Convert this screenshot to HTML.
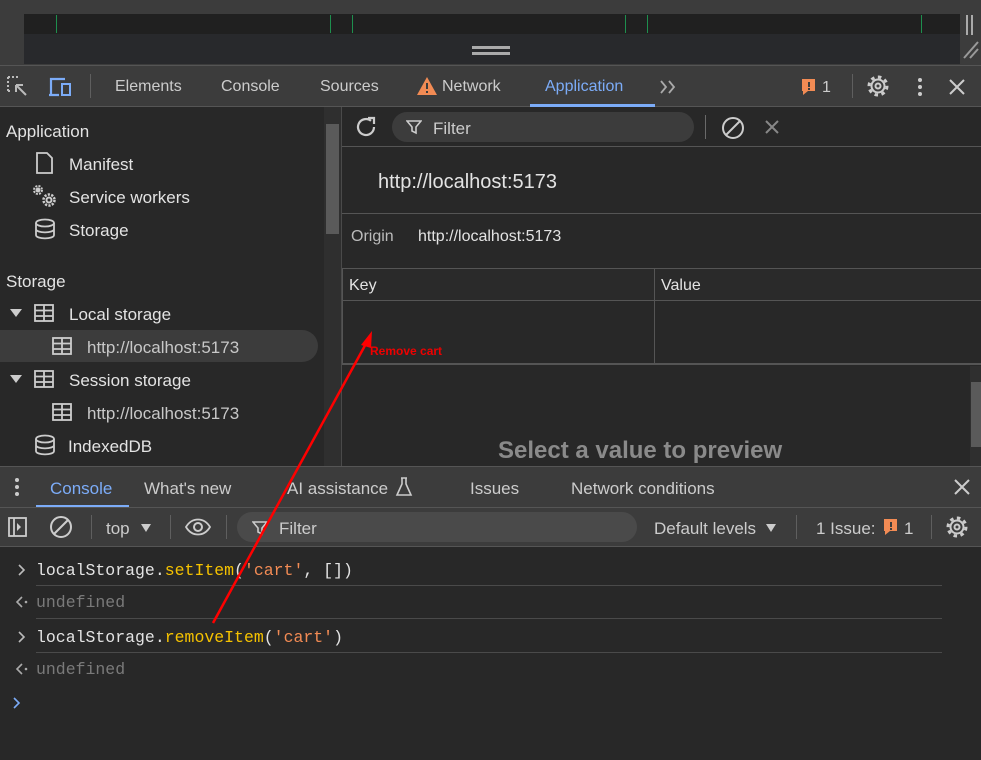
<!DOCTYPE html>
<html><head><style>
*{margin:0;padding:0;box-sizing:border-box}
body{width:981px;height:760px;overflow:hidden;background:#282828;font-family:"Liberation Sans",sans-serif;color:#e3e3e3;position:relative}
.a{position:absolute}
.t{font-size:16px;white-space:nowrap}
.mono{font-family:"Liberation Mono",monospace;font-size:16.5px;white-space:nowrap}
</style></head><body>
<div class="a" style="left:0;top:0;width:981px;height:65px;background:#3c3c3c"></div>
<div class="a" style="left:24px;top:14px;width:936px;height:20px;background:#202020"></div>
<div class="a" style="left:24px;top:34px;width:936px;height:30px;background:#28292c"></div>
<div class="a" style="left:56px;top:15px;width:1px;height:18px;background:#1e8f4e"></div>
<div class="a" style="left:330px;top:15px;width:1px;height:18px;background:#1e8f4e"></div>
<div class="a" style="left:352px;top:15px;width:1px;height:18px;background:#1e8f4e"></div>
<div class="a" style="left:625px;top:15px;width:1px;height:18px;background:#1e8f4e"></div>
<div class="a" style="left:647px;top:15px;width:1px;height:18px;background:#1e8f4e"></div>
<div class="a" style="left:921px;top:15px;width:1px;height:18px;background:#1e8f4e"></div>
<div class="a" style="left:472px;top:46px;width:38px;height:3px;background:#aaa"></div>
<div class="a" style="left:472px;top:52px;width:38px;height:3px;background:#aaa"></div>
<div class="a" style="left:966px;top:15px;width:2px;height:20px;background:#aaa"></div>
<div class="a" style="left:971px;top:15px;width:2px;height:20px;background:#aaa"></div>
<svg class="a" style="left:960px;top:38px" width="21" height="22"><path d="M4 20L18 4M10 20L18 11" stroke="#999" stroke-width="2"/></svg>
<div class="a" style="left:0;top:65px;width:981px;height:42px;background:#3c3c3c;border-top:1px solid #555;border-bottom:1px solid #555"></div>
<svg class="a" style="left:6px;top:75px" width="24" height="24"><path d="M2 2h12M2 2v14M2 16h4" stroke="#bbb" stroke-width="2" stroke-dasharray="2 2" fill="none"/><path d="M10 10l10 10M10 10v7M10 10h7" stroke="#bbb" stroke-width="2" fill="none"/></svg>
<svg class="a" style="left:47px;top:75px" width="28" height="24"><path d="M4 20V4h14M2 20h10" stroke="#7cacf8" stroke-width="2.2" fill="none"/><rect x="15" y="9" width="8" height="11" stroke="#7cacf8" stroke-width="2" fill="none"/></svg>
<div class="a" style="left:90px;top:74px;width:1px;height:24px;background:#5f5f5f"></div>
<div class="a t" style="left:115px;top:78px;color:#ccc">Elements</div>
<div class="a t" style="left:221px;top:78px;color:#ccc">Console</div>
<div class="a t" style="left:320px;top:78px;color:#ccc">Sources</div>
<svg class="a" style="left:416px;top:76px" width="22" height="20"><path d="M11 1L21 19H1Z" fill="#f28b54"/><rect x="10" y="7" width="2" height="6" fill="#3c3c3c"/><rect x="10" y="15" width="2" height="2" fill="#3c3c3c"/></svg>
<div class="a t" style="left:442px;top:78px;color:#ccc">Network</div>
<div class="a t" style="left:545px;top:78px;color:#7cacf8">Application</div>
<div class="a" style="left:530px;top:104px;width:125px;height:3px;background:#7cacf8"></div>
<svg class="a" style="left:658px;top:78px" width="22" height="18"><path d="M3 3l5 6-5 6M11 3l5 6-5 6" stroke="#aaa" stroke-width="1.8" fill="none"/></svg>
<svg class="a" style="left:800px;top:78px" width="18" height="18"><path d="M2 1h13v12H8l-5 4v-4H2Z" fill="#f28b54"/><rect x="8" y="4" width="2" height="5" fill="#3c3c3c"/><rect x="8" y="10" width="2" height="2" fill="#3c3c3c"/></svg>
<div class="a t" style="left:822px;top:79px;color:#ccc">1</div>
<div class="a" style="left:852px;top:74px;width:1px;height:24px;background:#5f5f5f"></div>
<svg class="a" style="left:866px;top:74px" width="24" height="24"><circle cx="12" cy="12" r="9" stroke="#ccc" stroke-width="3" fill="none" stroke-dasharray="3.5 3.5"/><circle cx="12" cy="12" r="6.5" stroke="#ccc" stroke-width="2" fill="none"/><circle cx="12" cy="12" r="2.5" stroke="#ccc" stroke-width="2" fill="none"/></svg>
<div class="a" style="left:918px;top:78px;width:4px;height:4px;border-radius:2px;background:#ccc;box-shadow:0 7px #ccc,0 14px #ccc"></div>
<svg class="a" style="left:948px;top:78px" width="18" height="18"><path d="M2 2L16 16M16 2L2 16" stroke="#ccc" stroke-width="2"/></svg>
<div class="a t" style="left:6px;top:122px;font-size:17px">Application</div>
<svg class="a" style="left:36px;top:152px" width="18" height="22"><path d="M1 1h10l5 5v15H1Z" stroke="#ccc" stroke-width="1.8" fill="none"/></svg>
<div class="a t" style="left:69px;top:155px;font-size:17px">Manifest</div>
<svg class="a" style="left:32px;top:184px" width="28" height="24"><circle cx="6" cy="6" r="4" stroke="#ccc" stroke-width="2" stroke-dasharray="2 1.2" fill="none"/><circle cx="6" cy="6" r="2.5" fill="#ccc"/><circle cx="17" cy="16" r="5.5" stroke="#ccc" stroke-width="2.5" stroke-dasharray="2.2 1.3" fill="none"/><circle cx="17" cy="16" r="3.5" fill="#ccc"/><circle cx="17" cy="16" r="1.5" fill="#282828"/></svg>
<div class="a t" style="left:69px;top:188px;font-size:17px">Service workers</div>
<svg class="a" style="left:34px;top:218px" width="22" height="22"><ellipse cx="11" cy="5" rx="9" ry="3.5" stroke="#ccc" stroke-width="1.8" fill="none"/><path d="M2 5v12c0 4.5 18 4.5 18 0V5M2 11c0 4.5 18 4.5 18 0" stroke="#ccc" stroke-width="1.8" fill="none"/></svg>
<div class="a t" style="left:69px;top:221px;font-size:17px">Storage</div>
<div class="a t" style="left:6px;top:272px;font-size:17px">Storage</div>
<div class="a" style="left:0;top:330px;width:318px;height:32px;background:#3c3c3c;border-radius:0 16px 16px 0"></div>
<svg class="a" width="0" height="0"><defs><g id="tb"><rect x="1" y="1" width="18" height="16" stroke="#ccc" stroke-width="1.8" fill="none"/><path d="M1 6.5h18M1 12h18M10 1v16" stroke="#ccc" stroke-width="1.8"/></g></defs></svg>
<div class="a" style="left:10px;top:309px;border:6px solid transparent;border-top:8px solid #ccc;border-bottom:0"></div>
<svg class="a" style="left:34px;top:304px" width="22" height="20"><use href="#tb"/></svg>
<div class="a t" style="left:69px;top:305px;font-size:17px">Local storage</div>
<svg class="a" style="left:52px;top:337px" width="22" height="20"><use href="#tb"/></svg>
<div class="a t" style="left:87px;top:338px;font-size:17px;color:#c8c8c8">http://localhost:5173</div>
<div class="a" style="left:10px;top:375px;border:6px solid transparent;border-top:8px solid #ccc;border-bottom:0"></div>
<svg class="a" style="left:34px;top:370px" width="22" height="20"><use href="#tb"/></svg>
<div class="a t" style="left:69px;top:371px;font-size:17px">Session storage</div>
<svg class="a" style="left:52px;top:403px" width="22" height="20"><use href="#tb"/></svg>
<div class="a t" style="left:87px;top:404px;font-size:17px;color:#c8c8c8">http://localhost:5173</div>
<svg class="a" style="left:34px;top:434px" width="22" height="22"><ellipse cx="11" cy="5" rx="9" ry="3.5" stroke="#ccc" stroke-width="1.8" fill="none"/><path d="M2 5v12c0 4.5 18 4.5 18 0V5M2 11c0 4.5 18 4.5 18 0" stroke="#ccc" stroke-width="1.8" fill="none"/></svg>
<div class="a t" style="left:68px;top:437px;font-size:17px">IndexedDB</div>
<div class="a" style="left:324px;top:107px;width:17px;height:359px;background:#2f2f2f"></div>
<div class="a" style="left:326px;top:124px;width:13px;height:110px;background:#5a5a5a"></div>
<div class="a" style="left:341px;top:107px;width:1px;height:359px;background:#4a4a4a"></div>
<svg class="a" style="left:354px;top:115px" width="24" height="24"><path d="M20 12a8 8 0 1 1-3-6.2" stroke="#ccc" stroke-width="2.2" fill="none"/><path d="M14 3h6v6" stroke="#ccc" stroke-width="2.2" fill="none"/></svg>
<div class="a" style="left:392px;top:112px;width:302px;height:30px;border-radius:15px;background:#3c3c3c"></div>
<svg class="a" style="left:406px;top:119px" width="16" height="16"><path d="M1 2h14l-5 6v6l-4-2V8Z" stroke="#ccc" stroke-width="1.6" fill="none"/></svg>
<div class="a t" style="left:433px;top:119px;color:#ccc;font-size:17px">Filter</div>
<div class="a" style="left:705px;top:115px;width:1px;height:24px;background:#6a6a6a"></div>
<svg class="a" style="left:720px;top:115px" width="26" height="26"><circle cx="13" cy="13" r="10" stroke="#ccc" stroke-width="2" fill="none"/><path d="M6 20L20 6" stroke="#ccc" stroke-width="2"/></svg>
<svg class="a" style="left:764px;top:119px" width="16" height="16"><path d="M2 2L14 14M14 2L2 14" stroke="#888" stroke-width="2"/></svg>
<div class="a" style="left:342px;top:146px;width:639px;height:1px;background:#555"></div>
<div class="a t" style="left:378px;top:171px;font-size:20px">http://localhost:5173</div>
<div class="a" style="left:342px;top:213px;width:639px;height:1px;background:#555"></div>
<div class="a t" style="left:351px;top:228px;color:#bbb">Origin</div>
<div class="a t" style="left:418px;top:228px">http://localhost:5173</div>
<div class="a" style="left:342px;top:268px;width:639px;height:1px;background:#555"></div>
<div class="a" style="left:343px;top:269px;width:638px;height:31px;background:#2a2a2a"></div>
<div class="a t" style="left:349px;top:277px">Key</div>
<div class="a t" style="left:661px;top:277px">Value</div>
<div class="a" style="left:342px;top:300px;width:639px;height:1px;background:#555"></div>
<div class="a" style="left:654px;top:269px;width:1px;height:94px;background:#555"></div>
<div class="a" style="left:342px;top:268px;width:1px;height:95px;background:#555"></div>
<div class="a" style="left:342px;top:363px;width:639px;height:2px;background:#555"></div>
<div class="a" style="left:370px;top:344px;color:#e00;font-size:12px;font-weight:bold;white-space:nowrap">Remove cart</div>
<div class="a" style="left:970px;top:366px;width:11px;height:100px;background:#2f2f2f"></div>
<div class="a" style="left:971px;top:382px;width:10px;height:65px;background:#5a5a5a"></div>
<div class="a" style="left:498px;top:437px;font-size:24px;font-weight:bold;color:#8a8a8a;white-space:nowrap">Select a value to preview</div>
<div class="a" style="left:0;top:466px;width:981px;height:81px;background:#3c3c3c;border-top:1px solid #555"></div>
<div class="a" style="left:15px;top:478px;width:4px;height:4px;border-radius:2px;background:#ccc;box-shadow:0 7px #ccc,0 14px #ccc"></div>
<div class="a t" style="left:50px;top:479px;color:#7cacf8;font-size:17px">Console</div>
<div class="a" style="left:36px;top:505px;width:93px;height:3px;background:#7cacf8"></div>
<div class="a t" style="left:144px;top:479px;color:#ccc;font-size:17px">What's new</div>
<div class="a t" style="left:287px;top:479px;color:#ccc;font-size:17px">AI assistance</div>
<svg class="a" style="left:395px;top:477px" width="18" height="20"><path d="M6 1h6M7 1v6L2 18h14L11 7V1" stroke="#ccc" stroke-width="1.6" fill="none"/></svg>
<div class="a t" style="left:470px;top:479px;color:#ccc;font-size:17px">Issues</div>
<div class="a t" style="left:571px;top:479px;color:#ccc;font-size:17px">Network conditions</div>
<svg class="a" style="left:954px;top:479px" width="16" height="16"><path d="M1 1L15 15M15 1L1 15" stroke="#ccc" stroke-width="2"/></svg>
<div class="a" style="left:0;top:507px;width:981px;height:1px;background:#555"></div>
<svg class="a" style="left:7px;top:516px" width="22" height="22"><rect x="2" y="2" width="17" height="18" stroke="#ccc" stroke-width="1.8" fill="none"/><path d="M7 2v18" stroke="#ccc" stroke-width="1.8"/><path d="M10 7l4 4-4 4Z" fill="#ccc"/></svg>
<svg class="a" style="left:49px;top:515px" width="24" height="24"><circle cx="12" cy="12" r="10" stroke="#ccc" stroke-width="2" fill="none"/><path d="M5 19L19 5" stroke="#ccc" stroke-width="2"/></svg>
<div class="a" style="left:91px;top:515px;width:1px;height:24px;background:#5f5f5f"></div>
<div class="a t" style="left:106px;top:519px;color:#ccc;font-size:17px">top</div>
<div class="a" style="left:141px;top:524px;border:5px solid transparent;border-top:8px solid #ccc;border-bottom:0"></div>
<div class="a" style="left:170px;top:515px;width:1px;height:24px;background:#5f5f5f"></div>
<svg class="a" style="left:184px;top:516px" width="28" height="22"><path d="M2 11C8 1 20 1 26 11C20 21 8 21 2 11Z" stroke="#ccc" stroke-width="1.8" fill="none"/><circle cx="14" cy="11" r="4" stroke="#ccc" stroke-width="2" fill="none"/></svg>
<div class="a" style="left:226px;top:515px;width:1px;height:24px;background:#5f5f5f"></div>
<div class="a" style="left:237px;top:512px;width:400px;height:30px;border-radius:15px;background:#4a4a4a"></div>
<svg class="a" style="left:252px;top:520px" width="16" height="16"><path d="M1 2h14l-5 6v6l-4-2V8Z" stroke="#ccc" stroke-width="1.6" fill="none"/></svg>
<div class="a t" style="left:279px;top:519px;color:#ccc;font-size:17px">Filter</div>
<div class="a t" style="left:654px;top:519px;color:#ccc;font-size:17px">Default levels</div>
<div class="a" style="left:766px;top:524px;border:5px solid transparent;border-top:8px solid #ccc;border-bottom:0"></div>
<div class="a" style="left:796px;top:515px;width:1px;height:24px;background:#5f5f5f"></div>
<div class="a t" style="left:816px;top:519px;color:#ccc;font-size:17px">1 Issue:</div>
<svg class="a" style="left:882px;top:518px" width="18" height="18"><path d="M2 1h13v12H8l-5 4v-4H2Z" fill="#f28b54"/><rect x="8" y="4" width="2" height="5" fill="#3c3c3c"/><rect x="8" y="10" width="2" height="2" fill="#3c3c3c"/></svg>
<div class="a t" style="left:904px;top:519px;color:#ccc;font-size:17px">1</div>
<div class="a" style="left:931px;top:515px;width:1px;height:24px;background:#5f5f5f"></div>
<svg class="a" style="left:945px;top:515px" width="24" height="24"><circle cx="12" cy="12" r="9" stroke="#ccc" stroke-width="3" fill="none" stroke-dasharray="3.5 3.5"/><circle cx="12" cy="12" r="6.5" stroke="#ccc" stroke-width="2" fill="none"/><circle cx="12" cy="12" r="2.5" stroke="#ccc" stroke-width="2" fill="none"/></svg>
<div class="a" style="left:0;top:546px;width:981px;height:1px;background:#555"></div>
<svg class="a" style="left:16px;top:563px" width="12" height="14"><path d="M3 2l5 5-5 5" stroke="#bbb" stroke-width="1.6" fill="none"/></svg>
<div class="a mono" style="left:36px;top:561px"><span style="color:#e3e3e3">localStorage.</span><span style="color:#f5c200">setItem</span>(<span style="color:#f28b54">'cart'</span>, [])</div>
<div class="a" style="left:36px;top:585px;width:906px;height:1px;background:#4a4a4a"></div>
<svg class="a" style="left:15px;top:595px" width="16" height="14"><path d="M7 2L2 7l5 5" stroke="#aaa" stroke-width="1.6" fill="none"/><circle cx="11" cy="7" r="1.3" fill="#aaa"/></svg>
<div class="a mono" style="left:36px;top:593px;color:#7a7a7a">undefined</div>
<div class="a" style="left:36px;top:618px;width:906px;height:1px;background:#4a4a4a"></div>
<svg class="a" style="left:16px;top:630px" width="12" height="14"><path d="M3 2l5 5-5 5" stroke="#bbb" stroke-width="1.6" fill="none"/></svg>
<div class="a mono" style="left:36px;top:628px"><span>localStorage.</span><span style="color:#f5c200">removeItem</span>(<span style="color:#f28b54">'cart'</span>)</div>
<div class="a" style="left:36px;top:652px;width:906px;height:1px;background:#4a4a4a"></div>
<svg class="a" style="left:15px;top:662px" width="16" height="14"><path d="M7 2L2 7l5 5" stroke="#aaa" stroke-width="1.6" fill="none"/><circle cx="11" cy="7" r="1.3" fill="#aaa"/></svg>
<div class="a mono" style="left:36px;top:660px;color:#7a7a7a">undefined</div>
<svg class="a" style="left:11px;top:696px" width="12" height="14"><path d="M3 2l5 5-5 5" stroke="#7cacf8" stroke-width="1.6" fill="none"/></svg>
<svg class="a" style="left:0;top:0" width="981" height="760"><path d="M213 623L368 340" stroke="#f00" stroke-width="2.5"/><path d="M372 331L361 345L371 348Z" fill="#f00"/></svg>
</body></html>
